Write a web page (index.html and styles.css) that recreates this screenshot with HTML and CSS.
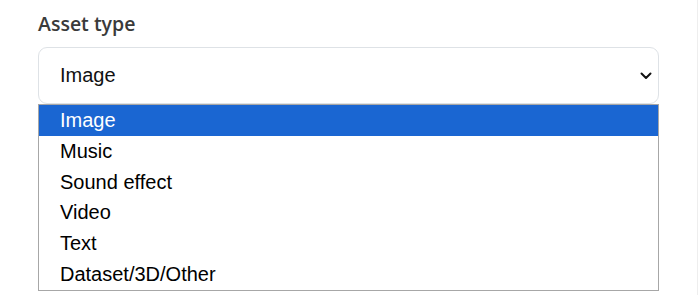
FILE: index.html
```html
<!DOCTYPE html>
<html>
<head>
<meta charset="utf-8">
<link rel="stylesheet" href="styles.css">
</head>
<body>
<div class="page">
  <div class="field">
    <div class="label">Asset type</div>
    <div class="select">
      <span class="value">Image</span>
      <svg class="chev" width="12" height="8" viewBox="0 0 12 8"><path d="M1.5 1.5 L6 6 L10.5 1.5" fill="none" stroke="#111" stroke-width="2" stroke-linecap="round" stroke-linejoin="round"/></svg>
    </div>
    <ul class="options">
      <li class="opt selected">Image</li>
      <li class="opt">Music</li>
      <li class="opt">Sound effect</li>
      <li class="opt">Video</li>
      <li class="opt">Text</li>
      <li class="opt">Dataset/3D/Other</li>
    </ul>
  </div>
</div>
</body>
</html>
```
FILE: styles.css
```css
html, body {
  margin: 0;
  padding: 0;
  background: #fff;
}
.page {
  width: 697px;
  height: 295px;
  border-right: 1px solid #eeeeee;
  overflow: hidden;
}
.field {
  position: relative;
  padding: 11px 0 0 38px;
  width: 621px;
}
.label {
  font-family: "Open Sans", "Noto Sans", sans-serif;
  font-weight: 600;
  font-size: 19.5px;
  line-height: 26px;
  color: #3a3a3a;
  margin-bottom: 10px;
}
.select {
  box-sizing: border-box;
  height: 57px;
  border: 1px solid #dee2e6;
  border-radius: 9px;
  display: flex;
  align-items: center;
  justify-content: space-between;
  padding: 0 6px 0 21px;
  font-family: "Liberation Sans", Arial, sans-serif;
  font-size: 20px;
  color: #111;
}
.chev {
  display: block;
}
.options {
  position: absolute;
  top: 104px;
  left: 38px;
  width: 621px;
  box-sizing: border-box;
  margin: 0;
  padding: 0;
  list-style: none;
  border: 1px solid #a7a7a7;
  background: #fff;
}
.opt {
  height: 30.83px;
  line-height: 30.83px;
  padding-left: 21px;
  font-family: "Liberation Sans", Arial, sans-serif;
  font-size: 20px;
  color: #000;
}
.opt.selected {
  background: #1a66d2;
  color: #fff;
}
```
